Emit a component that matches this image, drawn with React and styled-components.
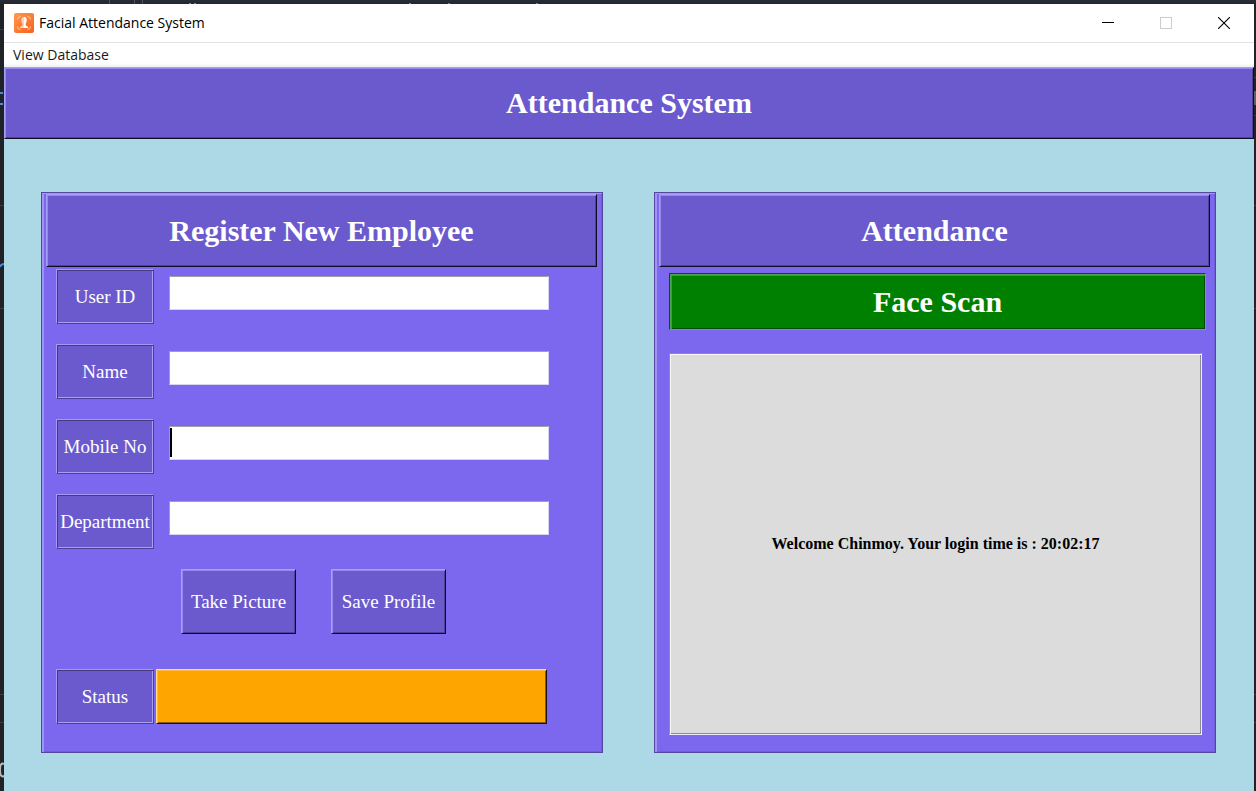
import React from "react";
import styled, { createGlobalStyle, css } from "styled-components";

const GlobalStyle = createGlobalStyle`
  *, *::before, *::after { box-sizing: border-box; }
  html, body { margin: 0; padding: 0; }
  body { background: #1f2227; overflow-x: hidden; }
  button, input { font: inherit; margin: 0; }
`;

const serif = `"Liberation Serif", "Times New Roman", serif`;
const sans = `"Open Sans", "Noto Sans", sans-serif`;

const raised = css`
  border: 1px solid;
  border-color: #a79ff2 #0f0b20 #0f0b20 #a79ff2;
  box-shadow: inset 1px 1px 0 #9488ea, inset -1px -1px 0 #4f4296;
`;

const Desktop = styled.div`
  position: relative;
  min-height: 100vh;
  display: flex;
  padding: 4px 2px 0 4px;
  background: linear-gradient(#272c38, #22262e 4px, #1f2226 5px);
`;

const Backdrop = styled.svg`
  position: absolute;
  inset: 0;
  width: 100%;
  height: 100%;
`;

const Window = styled.div`
  position: relative;
  flex: 1;
  min-width: 0;
  display: flex;
  flex-direction: column;
  background: #add8e6;
`;

const TitleBar = styled.header`
  display: flex;
  align-items: stretch;
  height: 39px;
  padding: 0 1px 0 10px;
  background: #fff;
  border-bottom: 1px solid #e3e3e3;
`;

const AppName = styled.div`
  flex: 1;
  display: flex;
  align-items: center;
  gap: 5px;
  font: 14px/20px ${sans};
  color: #000;
`;

const WindowControl = styled.button`
  display: flex;
  align-items: center;
  justify-content: center;
  width: 58px;
  padding: 0;
  border: 0;
  background: transparent;
  color: ${(p) => (p.disabled ? "#cccccc" : "#000")};
`;

const MenuBar = styled.nav`
  display: flex;
  height: 24px;
  padding-left: 9px;
  background: linear-gradient(#fff 20px, #f0f0f0);
`;

const MenuItem = styled.button`
  padding: 0;
  border: 0;
  background: transparent;
  font: 14px/22px ${sans};
  color: #1a1a1a;
`;

const Heading = styled.div`
  ${raised}
  display: flex;
  align-items: center;
  justify-content: center;
  background: #6a5acd;
  color: #fff;
  height: ${(p) => (p.$main ? 72 : 73)}px;

  h1, h2 { margin: 0; font: bold 30px/32px ${serif}; }
`;

const Main = styled.main`
  flex: 1;
  display: grid;
  grid-template-columns: 1fr 1fr;
  gap: 51px;
  align-items: stretch;
  align-content: start;
  padding: 53px 38px 38px 37px;
`;

const Panel = styled.section`
  display: flex;
  flex-direction: column;
  padding: 1px 5px 1px 4px;
  background: #7b68ee;
  border: 1px solid #5646a0;
  box-shadow: inset 2px 1px 0 #a094f2, inset -1px -1px 0 #6f5ed6;
`;

const Form = styled.form`
  display: flex;
  flex-direction: column;
  gap: 20px;
  padding: 2px 0 27px 10px;
`;

const Row = styled.div`
  display: flex;
  align-items: flex-start;
  gap: ${(p) => p.$gap}px;
  padding-right: ${(p) => (p.$status ? 50 : 48)}px;
  margin-top: ${(p) => (p.$status ? 15 : 0)}px;
`;

const Label = styled.label`
  flex: none;
  display: flex;
  align-items: center;
  justify-content: center;
  width: 98px;
  height: 55px;
  background: #6a5acd;
  border: 1px solid;
  border-color: #a499f3 #4d3f95 #4d3f95 #a499f3;
  box-shadow: inset 1px 1px 0 #46397f, inset -1px -1px 0 #a99ff2;
  font: 19px/24px ${serif};
  color: #fff;
`;

const Entry = styled.div`
  position: relative;
  flex: 1;
  display: flex;
  padding-top: 7px;

  ${(p) =>
    p.$active &&
    css`
      &::after {
        content: "";
        position: absolute;
        left: 1px;
        top: 9px;
        width: 2px;
        height: 29px;
        background: #000;
      }
    `}
`;

const TextBox = styled.input`
  flex: 1;
  min-width: 0;
  height: 34px;
  padding: 0 4px;
  border: 1px solid;
  border-color: #a0a0a0 #d8d4f0 #d8d4f0 #a0a0a0;
  border-radius: 0;
  outline: 0;
  background: #fff;
  font: 19px/24px ${serif};
`;

const Actions = styled.div`
  display: flex;
  gap: 35px;
  padding-left: 125px;
`;

const ActionButton = styled.button`
  ${raised}
  width: 115px;
  height: 65px;
  padding: 0;
  background: #6a5acd;
  border-radius: 0;
  font: 19px/24px ${serif};
  color: #fff;
`;

const StatusBox = styled.output`
  flex: 1;
  height: 55px;
  background: #ffa500;
  border: 1px solid;
  border-color: #ffd68a #1c1200 #1c1200 #ffd68a;
  box-shadow: inset 1px 1px 0 #ffb93c, inset -1px -1px 0 #8a5a00;
`;

const ScanButton = styled.button`
  height: 57px;
  margin: 6px 4px 0 10px;
  padding: 0;
  background: #008000;
  border: 1px solid;
  border-color: #0d4a1a #6fa287 #6fa287 #0d4a1a;
  border-radius: 0;
  box-shadow: inset 1px 1px 0 #4fa34f, inset 2px 2px 0 #3f993f,
    inset -1px -1px 0 #004d00;
  font: bold 30px/32px ${serif};
  color: #fff;
`;

const Message = styled.p`
  flex: 1;
  display: flex;
  align-items: center;
  justify-content: center;
  margin: 23px 8px 16px 10px;
  background: #dcdcdc;
  border: 1px solid;
  border-color: #8f8f8f #efeffb #efeffb #8f8f8f;
  box-shadow: inset 1px 1px 0 #f8f8f8, inset -1px -1px 0 #8b8b8b;
  font: bold 16px/18px ${serif};
  color: #000;
`;

const LINES = [205, 308, 694, 722];

function DesktopBackdrop() {
  return (
    <Backdrop aria-hidden="true">
      {LINES.map((y) => (
        <rect key={y} x="0" y={y} width="100%" height="1" fill="#3a3d42" />
      ))}
      <g fill="#4b8bd8">
        <rect x="0" y="92" width="3" height="2" />
        <rect x="0" y="103" width="3" height="2" />
      </g>
      <rect x="0" y="29" width="4" height="1" fill="#3a3d42" />
      <path d="M0 267Q1 264 4 264" fill="none" stroke="#4b8bd8" strokeWidth="2" />
      <path d="M4 764Q0 762 0 770T4 776" fill="none" stroke="#b8b8b8" strokeWidth="2" />
      <g fill="#4d5058">
        <rect x="109" y="0" width="1" height="4" />
        <rect x="134" y="0" width="1" height="4" />
        <rect x="142" y="0" width="1" height="4" />
      </g>
      <g fill="#7f838b">
        <rect x="189" y="3" width="2" height="1" />
        <rect x="194" y="3" width="2" height="1" />
        <rect x="409" y="3" width="2" height="1" />
        <rect x="448" y="3" width="2" height="1" />
        <rect x="536" y="3" width="2" height="1" />
      </g>
      <svg x="100%" overflow="visible">
        <rect x="-2" y="77" width="2" height="1" fill="#3a3d42" />
        <rect x="-2" y="91" width="2" height="14" fill="#5b5e63" />
        <rect x="-2" y="115" width="2" height="1" fill="#3a3d42" />
      </svg>
    </Backdrop>
  );
}

function FaceIcon() {
  return (
    <svg width="20" height="20" viewBox="0 0 20 20" aria-hidden="true">
      <defs>
        <linearGradient id="face-bg" x1="0" y1="0" x2="1" y2="1">
          <stop offset="0" stopColor="#ff9a4a" />
          <stop offset="1" stopColor="#f9601e" />
        </linearGradient>
      </defs>
      <rect width="20" height="20" rx="2" fill="url(#face-bg)" />
      <path
        d="M3.500 6.500Q3.500 3.500 6.500 3.500M13.500 3.500Q16.500 3.500 16.500 6.500M16.500 13.500Q16.500 16.500 13.500 16.500M6.500 16.500Q3.500 16.500 3.500 13.500"
        fill="none"
        stroke="#ffc9a3"
        strokeWidth="1"
      />
      <path
        d="M10 4C12.300 4 12.900 6 12.500 8C12.300 9.500 11.600 10.500 11.500 11.200V12.500L14 14V15H6V14L8.500 12.500V11.200C8.200 10.500 7.600 9.500 7.500 8C7.100 6 7.700 4 10 4Z"
        fill="#ffd5b8"
      />
      <path d="M10 4C12.300 4 12.900 6 12.500 8C12.200 9.500 11.500 10.500 11.500 11.500V12.500L14 14V15H10Z" fill="#fff" />
    </svg>
  );
}

const FIELDS = [
  { id: "user-id", label: "User ID" },
  { id: "name", label: "Name" },
  { id: "mobile", label: "Mobile No", active: true },
  { id: "department", label: "Department" },
];

export default function App() {
  return (
    <>
      <GlobalStyle />
      <Desktop>
        <DesktopBackdrop />
        <Window>
          <TitleBar>
            <AppName>
              <FaceIcon />
              <span>Facial Attendance System</span>
            </AppName>
            <WindowControl type="button" aria-label="Minimize">
              <svg width="12" height="12" shapeRendering="crispEdges">
                <rect x="0" y="5" width="12" height="1" fill="currentColor" />
              </svg>
            </WindowControl>
            <WindowControl type="button" aria-label="Maximize" disabled>
              <svg width="12" height="12">
                <rect x="0.5" y="0.5" width="11" height="11" fill="none" stroke="currentColor" />
              </svg>
            </WindowControl>
            <WindowControl type="button" aria-label="Close">
              <svg width="12" height="12">
                <path d="M0 0L12 12M12 0L0 12" fill="none" stroke="currentColor" strokeWidth="1.1" />
              </svg>
            </WindowControl>
          </TitleBar>
          <MenuBar>
            <MenuItem type="button">View Database</MenuItem>
          </MenuBar>
          <Heading $main>
            <h1>Attendance System</h1>
          </Heading>
          <Main>
            <Panel>
              <Heading>
                <h2>Register New Employee</h2>
              </Heading>
              <Form onSubmit={(e) => e.preventDefault()}>
                {FIELDS.map((f) => (
                  <Row key={f.id} $gap={15}>
                    <Label htmlFor={f.id}>{f.label}</Label>
                    <Entry $active={f.active}>
                      <TextBox id={f.id} type="text" />
                    </Entry>
                  </Row>
                ))}
                <Actions>
                  <ActionButton type="button">Take Picture</ActionButton>
                  <ActionButton type="submit">Save Profile</ActionButton>
                </Actions>
                <Row $gap={2} $status>
                  <Label htmlFor="status">Status</Label>
                  <StatusBox id="status" />
                </Row>
              </Form>
            </Panel>
            <Panel>
              <Heading>
                <h2>Attendance</h2>
              </Heading>
              <ScanButton type="button">Face Scan</ScanButton>
              <Message>Welcome Chinmoy. Your login time is : 20:02:17</Message>
            </Panel>
          </Main>
        </Window>
      </Desktop>
    </>
  );
}
